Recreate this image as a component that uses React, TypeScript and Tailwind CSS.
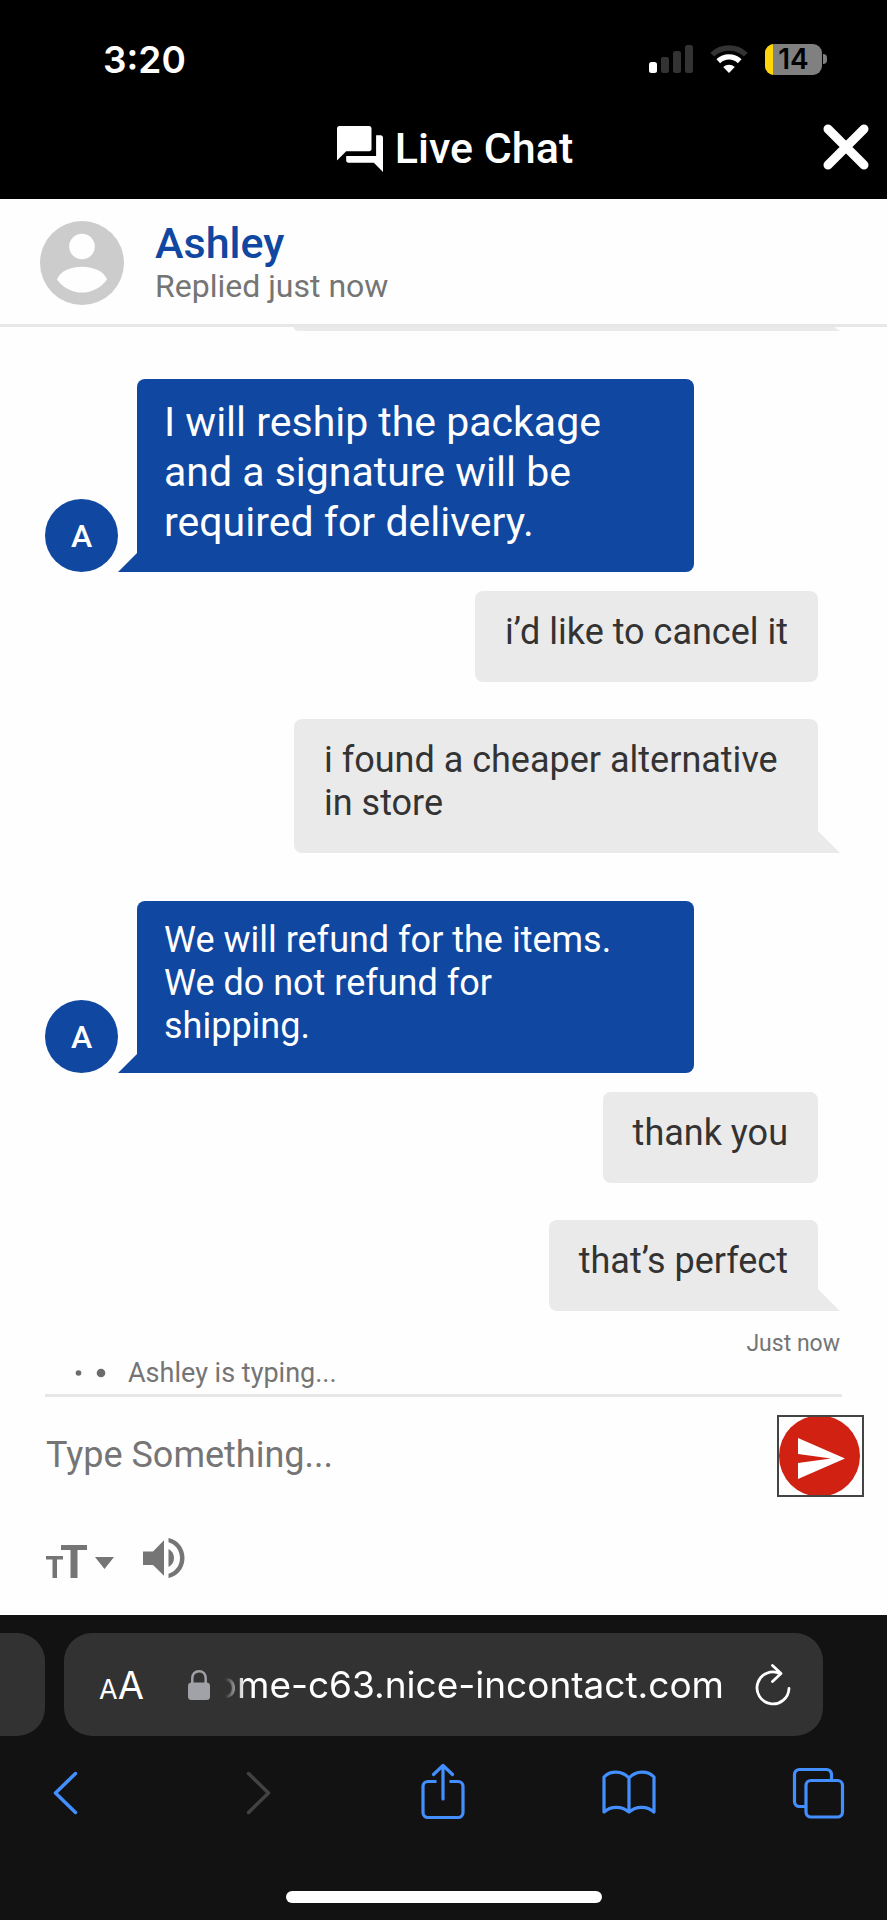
import type { ReactNode } from "react";

function AgentMessage({ large = false, children }: { large?: boolean; children: ReactNode }) {
  return (
    <div className="flex items-end gap-[19px] pl-[45px]">
      <span className="flex size-[73px] shrink-0 items-center justify-center rounded-full bg-[#0f47a1] text-[32px] leading-none font-medium text-white">
        A
      </span>
      <div
        className={
          large
            ? "relative mr-[193px] flex-1 rounded-t-lg rounded-br-lg bg-[#0f47a1] pt-[18px] pr-20 pb-[25px] pl-[27px] text-[41px] leading-[50px] text-white"
            : "relative mr-[193px] flex-1 rounded-t-lg rounded-br-lg bg-[#0f47a1] pt-[18px] pr-20 pb-[25px] pl-[27px] text-[36px] leading-[43px] text-white"
        }
      >
        {children}
        <span className="absolute right-full bottom-0 size-[19px] bg-[#0f47a1] [clip-path:polygon(100%_0,100%_100%,0_100%)]" />
      </div>
    </div>
  );
}

function VisitorMessage({ tail = false, children }: { tail?: boolean; children: ReactNode }) {
  return (
    <div className="flex justify-end pr-[69px] pl-[294px]">
      <div
        className={
          tail
            ? "relative rounded-t-lg rounded-bl-lg bg-[#eaeaea] px-[30px] pt-[20px] pb-[28px] text-[36px] leading-[43px] text-[#333]"
            : "relative rounded-lg bg-[#eaeaea] px-[30px] pt-[20px] pb-[28px] text-[36px] leading-[43px] text-[#333]"
        }
      >
        {children}
        {tail && (
          <span className="absolute bottom-0 left-full size-[22px] bg-[#eaeaea] [clip-path:polygon(0_0,100%_100%,0_100%)]" />
        )}
      </div>
    </div>
  );
}

function StatusBar() {
  return (
    <div className="flex h-[118px] items-center justify-between pr-[60px] pl-[103px] text-white">
      <span className="font-['Inter',sans-serif] text-[37px] leading-none font-semibold">3:20</span>
      <div className="flex items-center gap-[17px]">
        <svg width="44" height="28" viewBox="0 0 44 28" aria-hidden="true">
          <rect x="0" y="17" width="8" height="11" rx="2.5" fill="#fff" />
          <rect x="12" y="12" width="8" height="16" rx="2.5" fill="#333" />
          <rect x="24" y="6" width="8" height="22" rx="2.5" fill="#333" />
          <rect x="36" y="0" width="8" height="28" rx="2.5" fill="#333" />
        </svg>
        <svg width="38" height="28" viewBox="0 0 38 28" fill="none" aria-hidden="true">
          <path d="M2.2 9.6a24.5 24.5 0 0 1 33.6 0" stroke="#333" strokeWidth="5.4" />
          <path d="M8.3 16.2a15.5 15.5 0 0 1 21.4 0" stroke="#fff" strokeWidth="5.4" />
          <path d="M19 28l-5.8-6a8.6 8.6 0 0 1 11.6 0z" fill="#fff" />
        </svg>
        <div className="flex items-center gap-px">
          <span className="flex h-[31px] w-[57px] items-center overflow-hidden rounded-[9px] bg-[#808080]">
            <span className="h-full w-[8px] bg-[#ffd60a]" />
            <span className="flex-1 pr-2 text-center font-['Inter',sans-serif] text-[28px] leading-none font-semibold text-black">
              14
            </span>
          </span>
          <span className="h-[10px] w-[4px] rounded-r-full bg-[#808080]" />
        </div>
      </div>
    </div>
  );
}

function ChatHeader() {
  return (
    <header className="flex h-[81px] items-start pr-[18px] pl-[87px] text-white">
      <h1 className="flex flex-1 items-start justify-center gap-[12px] pt-[6px] text-[43px] leading-[48px] font-medium">
        <svg className="mt-[2px]" width="46" height="46" viewBox="2 2 20 20" fill="currentColor" aria-hidden="true">
          <path d="M21 6h-2v9H6v2c0 .55.45 1 1 1h11l4 4V7c0-.55-.45-1-1-1zm-4 6V3c0-.55-.45-1-1-1H3c-.55 0-1 .45-1 1v14l4-4h10c.55 0 1-.45 1-1z" />
        </svg>
        Live Chat
      </h1>
      <button type="button" aria-label="Close chat" className="mt-[6px]">
        <svg width="46" height="46" viewBox="0 0 46 46" fill="none" stroke="#fff" strokeWidth="9" strokeLinecap="round">
          <path d="M5 5l36 36M41 5L5 41" />
        </svg>
      </button>
    </header>
  );
}

export default function App() {
  return (
    <div className="w-full bg-[#fefefe] font-['Roboto',sans-serif]">
      <div className="bg-black">
        <StatusBar />
        <ChatHeader />
      </div>

      <section className="flex h-[128px] items-start gap-[31px] border-b-[3px] border-[#e7e7e7] pt-[22px] pl-[40px]">
        <svg className="shrink-0" width="84" height="84" viewBox="0 0 84 84" aria-hidden="true">
          <circle cx="42" cy="42" r="42" fill="#ccc" />
          <circle cx="42" cy="25.5" r="12.8" fill="#fefefe" />
          <path d="M17 58.5c3-9 15-12.8 25-12.8s22 3.8 25 12.8a30.5 30.5 0 0 1-50 0z" fill="#fefefe" />
        </svg>
        <div>
          <h2 className="text-[43px] leading-[44px] font-medium text-[#0f47a1]">Ashley</h2>
          <p className="text-[32px] leading-[42px] text-[#757575]">Replied just now</p>
        </div>
      </section>

      <main>
        <div className="flex pr-[47px] pl-[294px]" aria-hidden="true">
          <span className="h-[4px] flex-1 rounded-bl-lg bg-[#eaeaea] [clip-path:polygon(0_0,99%_0,100%_100%,0_100%)]" />
        </div>
        <ul className="pt-[48px]">
          <li>
            <AgentMessage large>
              I will reship the package and a signature will be required for delivery.
            </AgentMessage>
          </li>
          <li className="flex flex-col gap-[37px] pt-[19px] pb-[48px]">
            <VisitorMessage>i’d like to cancel it</VisitorMessage>
            <VisitorMessage tail>i found a cheaper alternative in store</VisitorMessage>
          </li>
          <li>
            <AgentMessage>We will refund for the items. We do not refund for shipping.</AgentMessage>
          </li>
          <li className="flex flex-col gap-[37px] pt-[19px]">
            <VisitorMessage>thank you</VisitorMessage>
            <VisitorMessage tail>that’s perfect</VisitorMessage>
          </li>
        </ul>
        <p className="pt-[19px] pr-[47px] text-right text-[23px] leading-[28px] text-[#757575]">Just now</p>
      </main>

      <div className="mx-[45px] flex h-[39px] items-center gap-[21px] border-b-[3px] border-[#e7e7e7] pb-[6px] pl-[30px] text-[27px] leading-none text-[#757575]">
        <svg width="32" height="10" viewBox="0 0 32 10" fill="#6b6b6b" aria-hidden="true">
          <circle cx="3.5" cy="5" r="2.8" />
          <circle cx="26" cy="5" r="4.3" />
        </svg>
        Ashley is typing...
      </div>

      <form className="flex items-start pt-[18px] pr-[23px] pl-[46px]">
        <input
          type="text"
          aria-label="Message"
          placeholder="Type Something..."
          className="h-[80px] min-w-0 flex-1 bg-transparent text-[36px] text-[#333] outline-none placeholder:text-[#757575]"
        />
        <button type="button" aria-label="Send" className="h-[82px] w-[87px] overflow-hidden border-2 border-[#444]">
          <svg width="83" height="78" viewBox="0 0 83 78" aria-hidden="true">
            <circle cx="40.5" cy="39" r="40.5" fill="#d02113" />
            <path d="M19 21l47 20.5L19 62V46l33-4.5-33-4.5z" fill="#fff" />
          </svg>
        </button>
      </form>

      <div className="flex h-[118px] items-start gap-[29px] pt-[41px] pl-[45px] text-[#757575]">
        <button type="button" aria-label="Text size">
          <svg width="69" height="40" viewBox="0 0 69 40" fill="currentColor" aria-hidden="true">
            <path d="M16 7h26v5H32.500v28h-7V12H16zM1 18h17v3.500h-6v18.500h-4.500V21.500H1zM50 19h19l-9.500 12z" />
          </svg>
        </button>
        <button type="button" aria-label="Sound">
          <svg width="42" height="40" viewBox="0 0 42 40" fill="currentColor" aria-hidden="true">
            <path d="M0 13.5h10L21 2.3v35.4L10 27H0zM25.5 11c3.8 2 5.5 5.2 5.5 9s-1.700 7-5.500 9z" />
            <path d="M25.5 0C35 2 41.5 10 41.5 20S35 38 25.5 40v-4.300C32.500 33.600 37 27.500 37 20S32.500 6.400 25.500 4.300z" />
          </svg>
        </button>
      </div>

      <footer className="bg-[#121212] pt-[18px] pb-[18px]">
        <div className="flex pr-[64px]">
          <div className="mr-[19px] h-[103px] w-[45px] shrink-0 rounded-r-[28px] bg-[#323232]" />
          <div className="flex h-[103px] min-w-0 flex-1 items-center rounded-[28px] bg-[#323232] pr-[32px] pl-[35px] font-['Inter',sans-serif] text-white">
            <button type="button" aria-label="Page settings" className="flex items-baseline leading-none">
              <span className="text-[27px]">A</span>
              <span className="text-[38px]">A</span>
            </button>
            <svg className="ml-[44px] shrink-0" width="22" height="30" viewBox="0 0 22 30" aria-hidden="true">
              <path d="M4.3 14V8.2C4.3 4 7 1.3 11 1.3s6.7 2.7 6.7 6.9V14" fill="none" stroke="#a1a1a8" strokeWidth="2.5" />
              <rect x="0" y="12.5" width="22" height="17.5" rx="3.5" fill="#a1a1a8" />
            </svg>
            <div className="ml-[15px] flex min-w-0 flex-1 justify-end overflow-hidden text-[37px] leading-[50px] whitespace-nowrap [mask-image:linear-gradient(to_right,transparent,black_20px)]">
              ome-c63.nice-incontact.com
            </div>
            <button type="button" aria-label="Reload" className="ml-[31px] shrink-0">
              <svg width="36" height="44" viewBox="0 0 36 44" fill="none" stroke="#fff" strokeWidth="2.8" strokeLinecap="round" strokeLinejoin="round">
                <path d="M34 25.5A16 16 0 1 1 25 10.5M17.5 2.5l8.5 8-8.5 8" />
              </svg>
            </button>
          </div>
        </div>
        <nav className="flex items-center justify-between pt-[25px] pr-[42px] pl-[38px] text-[#438fff]">
          <button type="button" aria-label="Back">
            <svg width="54" height="60" viewBox="0 0 54 60" fill="none" stroke="currentColor" strokeWidth="3.5" strokeLinecap="round" strokeLinejoin="round">
              <path d="M37.5 12.5l-20 19.5 20 19.5" />
            </svg>
          </button>
          <button type="button" aria-label="Forward" disabled>
            <svg width="54" height="60" viewBox="0 0 54 60" fill="none" stroke="#424242" strokeWidth="3.5" strokeLinecap="round" strokeLinejoin="round">
              <path d="M22.5 12.5l20 19.5-20 19.5" />
            </svg>
          </button>
          <button type="button" aria-label="Share">
            <svg width="54" height="60" viewBox="0 0 54 60" fill="none" stroke="currentColor" strokeWidth="3.2" strokeLinecap="round" strokeLinejoin="round">
              <path d="M29 38V5M19.5 13.5L29 4.5l9.5 9" />
              <path strokeLinecap="butt" d="M22.5 20.5H14a5 5 0 0 0-5 5v26a5 5 0 0 0 5 5h30a5 5 0 0 0 5-5v-26a5 5 0 0 0-5-5h-8.5" />
            </svg>
          </button>
          <button type="button" aria-label="Bookmarks">
            <svg width="56" height="60" viewBox="0 0 56 60" fill="none" stroke="currentColor" strokeWidth="3.2" strokeLinejoin="round">
              <path d="M28 17C21 9 9 9.5 3 16v35c7-6.5 18-6 25 0 7-6 18-6.5 25 0V16c-6-6.5-18-7-25 1zm0 0v34" />
            </svg>
          </button>
          <button type="button" aria-label="Tabs">
            <svg width="54" height="60" viewBox="0 0 54 60" fill="none" stroke="currentColor" strokeWidth="3.2">
              <rect x="15" y="19.5" width="36.5" height="36.5" rx="5" />
              <path d="M15 45.5H8.5a5 5 0 0 1-5-5v-27a5 5 0 0 1 5-5h27a5 5 0 0 1 5 5v6" />
            </svg>
          </button>
        </nav>
        <div className="mx-auto mt-[70px] h-[12px] w-[316px] rounded-full bg-white" />
      </footer>
    </div>
  );
}
